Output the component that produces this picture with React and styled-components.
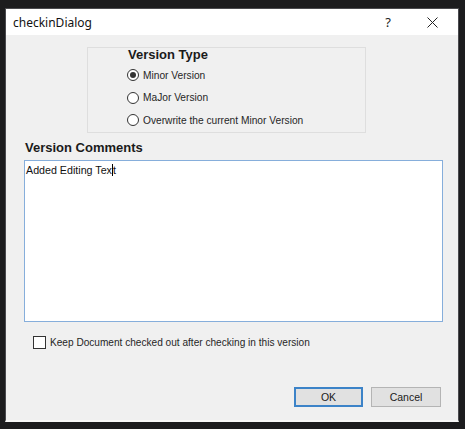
import { createGlobalStyle } from "styled-components"
import styled from "styled-components"

const GlobalStyle = createGlobalStyle`
* { box-sizing: border-box; }
html, body { margin: 0; padding: 0; background: #1c1c1e; }
body { font-family: "Liberation Sans", Arial, sans-serif; }
`

const Screen = styled.div`
width: 465px;
height: 429px;
padding: 8px 6px 7px 5px;
background: #1c1c1e;
display: flex;
flex-direction: column;
`

const Dialog = styled.div`
flex: 1;
display: flex;
flex-direction: column;
background: #f0f0f0;
border: 1px solid #4a4a4e;
border-bottom: 2px solid #f7f7f7;
`

const TitleBar = styled.div`
height: 26px;
flex: none;
background: #ffffff;
display: flex;
align-items: center;
padding-left: 7px;
font-family: "Noto Sans", "Open Sans", sans-serif;
font-size: 12px;
color: #111;
`

const TitleText = styled.span`
flex: 1;
`

const TitleButton = styled.span`
width: ${p => p.$w}px;
display: flex;
justify-content: center;
align-items: center;
font-size: 13px;
color: #222;
`

const Body = styled.div`
flex: 1;
display: flex;
flex-direction: column;
padding: 12px 17px 0 18px;
`

const GroupBox = styled.div`
margin-left: 63px;
width: 279px;
height: 86px;
border: 1px solid #dedede;
padding-left: 39px;
`

const Heading = styled.div`
font-size: 13px;
font-weight: bold;
line-height: 12px;
color: #1a1a1a;
margin-left: ${p => p.$indent || 0}px;
margin-top: ${p => p.$top || 0}px;
`

const RadioList = styled.div`
margin-top: 3px;
display: flex;
flex-direction: column;
`

const RadioRow = styled.label`
height: 22.5px;
display: flex;
align-items: center;
gap: 4px;
font-size: 10.2px;
color: #262626;
`

const RadioCircle = styled.span`
width: 12px;
height: 12px;
border-radius: 50%;
border: 1px solid #333;
background: #fff;
display: flex;
align-items: center;
justify-content: center;
&::after {
    content: "";
    width: 6px;
    height: 6px;
    border-radius: 50%;
    background: ${p => (p.$checked ? "#333" : "transparent")};
}
`

const CommentBox = styled.div`
margin-top: 6px;
width: 419px;
height: 162px;
background: #fff;
border: 1px solid #86aedb;
padding: 3px 1px;
font-size: 10.7px;
color: #111;
`

const Caret = styled.span`
display: inline-block;
width: 1px;
height: 12px;
background: #000;
vertical-align: -2px;
`

const CheckRow = styled.label`
margin-top: 14px;
margin-left: 9px;
display: flex;
align-items: center;
gap: 4px;
font-size: 10.1px;
color: #262626;
`

const CheckBox = styled.span`
width: 13px;
height: 13px;
border: 1px solid #333;
background: #fff;
`

const ButtonRow = styled.div`
margin-top: 38px;
display: flex;
justify-content: flex-end;
gap: 8px;
`

const Button = styled.button`
width: ${p => p.$w}px;
height: 20px;
background: #e1e1e1;
border: ${p => (p.$default ? "2px solid #3c83c8" : "1px solid #b4b4b4")};
font-family: "Liberation Sans", Arial, sans-serif;
font-size: 10.5px;
color: #1a1a1a;
padding: 0;
`

const radios = [
    { label: "Minor Version", checked: true },
    { label: "MaJor Version" },
    { label: "Overwrite the current Minor Version" },
]

export default function App() {
    return <Screen>
        <GlobalStyle />
        <Dialog>
            <TitleBar>
                <TitleText>checkinDialog</TitleText>
                <TitleButton $w={36}>?</TitleButton>
                <TitleButton $w={52}>
                    <svg width="11" height="11" viewBox="0 0 11 11">
                        <path d="M0.5 0.5 L10.5 10.5 M10.5 0.5 L0.5 10.5" stroke="#222" strokeWidth="1" fill="none" />
                    </svg>
                </TitleButton>
            </TitleBar>
            <Body>
                <GroupBox>
                    <Heading $indent={1} $top={1}>Version Type</Heading>
                    <RadioList>
                        {radios.map(r => <RadioRow key={r.label}>
                            <RadioCircle $checked={r.checked} />
                            {r.label}
                        </RadioRow>)}
                    </RadioList>
                </GroupBox>
                <Heading $indent={1} $top={9}>Version Comments</Heading>
                <CommentBox>Added Editing Tex<Caret />t</CommentBox>
                <CheckRow>
                    <CheckBox />
                    Keep Document checked out after checking in this version
                </CheckRow>
                <ButtonRow>
                    <Button $w={69} $default>OK</Button>
                    <Button $w={70}>Cancel</Button>
                </ButtonRow>
            </Body>
        </Dialog>
    </Screen>
}
